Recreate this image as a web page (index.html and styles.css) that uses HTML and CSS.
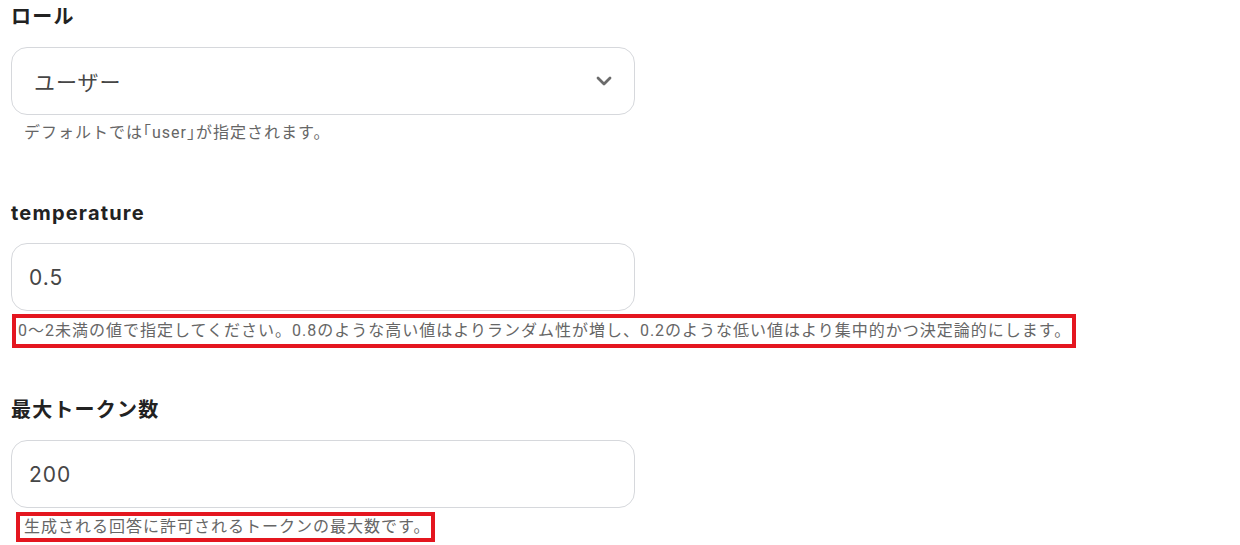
FILE: index.html
```html
<!DOCTYPE html>
<html lang="ja">
<head>
  <meta charset="UTF-8" />
  <meta name="viewport" content="width=device-width, initial-scale=1.0"/>
  <title>設定</title>
  <link rel="stylesheet" href="styles.css">
</head>
<body>
  <div class="form">
    <div class="field">
      <label class="label">ロール</label>
      <div class="box select">
        <span>ユーザー</span>
        <svg class="chevron" width="16" height="10" viewBox="0 0 16 10">
          <path d="M2 2 L8 8 L14 2" fill="none" stroke="#6b6b6b" stroke-width="2.8" stroke-linecap="round" stroke-linejoin="round"/>
        </svg>
      </div>
      <p class="help">デフォルトでは<span class="tight">「</span>user<span class="tight">」</span>が指定されます。</p>
    </div>

    <div class="field">
      <label class="label">temperature</label>
      <div class="box">0.5</div>
      <p class="help marked marked-wide">0〜2未満の値で指定してください。0.8のような高い値はよりランダム性が増し、0.2のような低い値はより集中的かつ決定論的にします。</p>
    </div>

    <div class="field">
      <label class="label">最大トークン数</label>
      <div class="box">200</div>
      <p class="help marked marked-short">生成される回答に許可されるトークンの最大数です。</p>
    </div>
  </div>
</body>
</html>
```

FILE: styles.css
```css
* {
  margin: 0;
  padding: 0;
  box-sizing: border-box;
}
html,
body {
  height: 100%;
}
body {
  font-family: Inter, "Noto Sans CJK JP", sans-serif;
  background-color: #fff;
  color: #222;
}
.form {
  padding: 3px 0 0 11px;
}
.field {
  margin-bottom: 54px;
}
.field:last-child {
  margin-bottom: 0;
}
.label {
  display: block;
  font-size: 20px;
  font-weight: bold;
  line-height: 28px;
  letter-spacing: 1.2px;
  margin-bottom: 16px;
  color: #222;
}
.box {
  display: flex;
  align-items: center;
  justify-content: space-between;
  width: 624px;
  height: 68px;
  padding: 0 22px 0 17px;
  border: 1px solid #d6d8dc;
  border-radius: 16px;
  font-size: 21px;
  letter-spacing: 1px;
  color: #464646;
}
.select {
  padding-left: 22px;
}
.chevron {
  display: block;
}
.help {
  display: block;
  width: fit-content;
  margin: 6px 0 0 13px;
  font-family: Roboto, "Noto Sans CJK JP", sans-serif;
  font-size: 16px;
  line-height: 24px;
  color: #666;
  letter-spacing: 1px;
}
.tight {
  font-feature-settings: "halt";
}
.marked {
  outline: 4px solid #e4161f;
}
.marked-wide {
  margin: 7px 0 -2px 5px;
  padding: 0 1px 0 2px;
  line-height: 26px;
}
.marked-short {
  margin: 8px 0 0 9px;
  padding: 0 1px 0 4px;
  line-height: 22px;
}
```
